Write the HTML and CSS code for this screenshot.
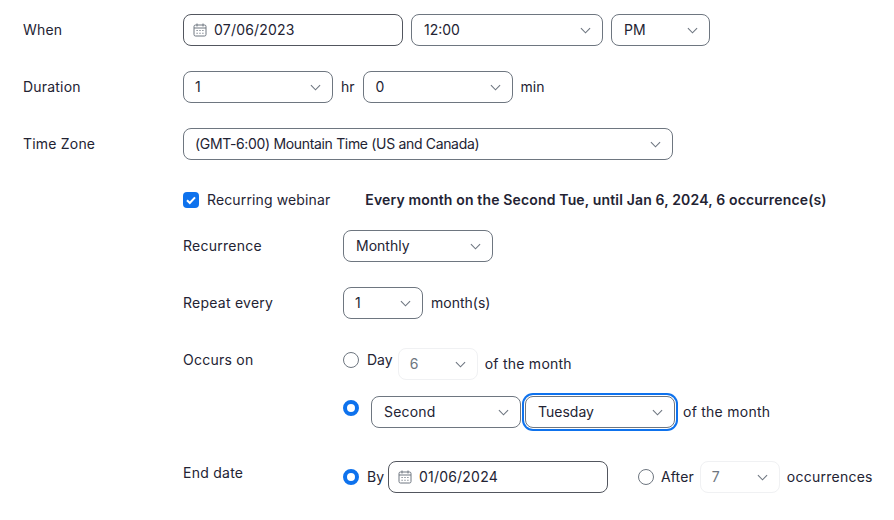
FILE: index.html
```html
<!DOCTYPE html>
<html lang="en">
<head>
<meta charset="utf-8">
<title>Webinar schedule</title>
<link rel="stylesheet" href="styles.css">
</head>
<body>
<svg class="defs" width="0" height="0" aria-hidden="true">
  <symbol id="chev" viewBox="0 0 12 12"><path d="M1 3.500 6 8.500 11 3.500" fill="none" stroke="currentColor" stroke-width="1.200"/></symbol>
  <symbol id="cal" viewBox="0 0 14 14"><path d="M2.500 2h9A1.500 1.500 0 0 1 13 3.500v8a1.500 1.500 0 0 1-1.500 1.500h-9A1.500 1.500 0 0 1 1 11.500v-8A1.500 1.500 0 0 1 2.500 2ZM1 5h12M4 .5v3M10 .5v3" fill="none" stroke="#6e7680" stroke-width="1"/><path d="M3.500 7h1.200v1.100H3.500ZM6.400 7h1.200v1.100H6.400ZM9.300 7h1.200v1.100H9.300ZM3.500 9.700h1.200v1.100H3.500ZM6.400 9.700h1.200v1.100H6.400ZM9.300 9.700h1.200v1.100H9.300Z" fill="#6e7680"/></symbol>
</svg>
<main class="form">
  <div class="row r-when">
    <div class="label">When</div>
    <div class="field w220 dark"><svg class="cal"><use href="#cal"/></svg><span class="date">07/06/2023</span></div>
    <div class="field select w192"><span>12:00</span><svg class="chev"><use href="#chev"/></svg></div>
    <div class="field select w99"><span>PM</span><svg class="chev"><use href="#chev"/></svg></div>
  </div>
  <div class="row r-duration">
    <div class="label">Duration</div>
    <div class="field select w150"><span class="nudge">1</span><svg class="chev"><use href="#chev"/></svg></div>
    <span class="unit hr">hr</span>
    <div class="field select w150"><span>0</span><svg class="chev"><use href="#chev"/></svg></div>
    <span class="unit">min</span>
  </div>
  <div class="row r-zone">
    <div class="label">Time Zone</div>
    <div class="field select w490"><span class="tight">(GMT-6:00) Mountain Time (US and Canada)</span><svg class="chev"><use href="#chev"/></svg></div>
  </div>
  <div class="sub">
    <div class="recurring">
      <span class="check"><svg viewBox="0 0 16 16" width="16" height="16"><path d="M4 8.300 6.800 11 12 5.400" fill="none" stroke="#fff" stroke-width="2"/></svg></span>
      <span class="check-label">Recurring webinar</span>
      <strong class="summary">Every month on the Second Tue, until Jan 6, 2024, 6 occurrence(s)</strong>
    </div>
    <div class="row r-recur">
      <div class="sublabel">Recurrence</div>
      <div class="field select w150"><span>Monthly</span><svg class="chev"><use href="#chev"/></svg></div>
    </div>
    <div class="row r-repeat">
      <div class="sublabel">Repeat every</div>
      <div class="field select w80"><span class="nudge">1</span><svg class="chev"><use href="#chev"/></svg></div>
      <span class="unit">month(s)</span>
    </div>
    <div class="occurs">
      <div class="sublabel">Occurs on</div>
      <div class="occurs-options">
        <div class="opt-day">
          <span class="radio"></span>
          <span class="opt-text">Day</span>
          <div class="field select w80 muted"><span class="nudge">6</span><svg class="chev"><use href="#chev"/></svg></div>
          <span class="unit wide">of the month</span>
        </div>
        <div class="opt-week">
          <span class="radio on"></span>
          <div class="field select w150"><span class="date">Second</span><svg class="chev"><use href="#chev"/></svg></div>
          <div class="field select w150 focus"><span>Tuesday</span><svg class="chev"><use href="#chev"/></svg></div>
          <span class="unit wide">of the month</span>
        </div>
      </div>
    </div>
    <div class="row r-end">
      <div class="sublabel end-label">End date</div>
      <span class="radio on"></span>
      <span class="by">By</span>
      <div class="field w220 dark"><svg class="cal"><use href="#cal"/></svg><span class="date">01/06/2024</span></div>
      <span class="radio after"></span>
      <span class="after-text">After</span>
      <div class="field select w80 muted"><span class="nudge">7</span><svg class="chev"><use href="#chev"/></svg></div>
      <span class="unit wide last">occurrences</span>
    </div>
  </div>
</main>
</body>
</html>
```
FILE: styles.css
```css
* { box-sizing: border-box; }
html, body { margin: 0; padding: 0; background: #fff; }
body {
  width: 894px;
  height: 520px;
  overflow: hidden;
  font-family: Inter, "Liberation Sans", sans-serif;
  font-size: 14px;
  color: #232333;
}
.defs { display: block; height: 0; }
.form { padding: 14px 0 0 23px; }
.row { display: flex; align-items: center; height: 32px; }
.label { width: 160px; flex: none; letter-spacing: .2px; padding-bottom: 2px; }
.sublabel { width: 160px; flex: none; letter-spacing: .25px; padding-bottom: 2px; }
.r-when .field + .field { margin-left: 8px; }
.r-duration, .r-zone { margin-top: 25px; }
.sub { padding-left: 160px; }
.recurring { display: flex; align-items: center; height: 16px; margin-top: 32px; }
.check { width: 16px; height: 16px; border-radius: 4px; background: #0e72ed; flex: none; display: block; }
.check svg { display: block; }
.check-label { margin: 0 0 2px 8px; letter-spacing: .13px; }
.summary { margin: 0 0 2px 35px; font-weight: 600; letter-spacing: .155px; }
.r-recur { margin-top: 22px; }
.r-repeat { margin-top: 25px; }
.field {
  display: flex;
  align-items: center;
  height: 32px;
  flex: none;
  border: 1px solid #6e7680;
  border-radius: 8px;
  padding: 0 11px 0 12px;
  background: #fff;
}
.field.select { justify-content: space-between; }
.field > span { white-space: nowrap; margin-bottom: 2px; }
.date { letter-spacing: .2px; }
.tight { letter-spacing: -.33px; margin-left: -1px; }
.nudge { margin-left: -1px; }
.dark { border-color: #52565e; }
.w80 { width: 80px; }
.w99 { width: 99px; }
.w150 { width: 150px; }
.w192 { width: 192px; }
.w220 { width: 220px; padding-left: 9px; }
.w490 { width: 490px; }
.chev { width: 11px; height: 11px; flex: none; color: #6e7680; }
.cal { width: 14px; height: 14px; margin-right: 7px; flex: none; }
.unit { margin: 0 0 2px 8px; white-space: nowrap; }
.unit.hr { margin-right: 8px; }
.unit.wide { letter-spacing: .25px; }
.unit.last { margin-left: 7px; }
.muted { border-color: #f0f1f3; color: #6e7680; }
.focus { box-shadow: 0 0 0 1px #fff, 0 0 0 3px #0e72ed; border-color: #6e7680; }
.occurs { display: flex; margin-top: 29px; }
.occurs .sublabel { line-height: 17px; margin-top: 3px; }
.radio {
  width: 16px;
  height: 16px;
  flex: none;
  border-radius: 50%;
  border: 1px solid #6e7680;
  background: #fff;
  display: block;
}
.radio.on { border: 4px solid #0e72ed; }
.opt-day { display: flex; align-items: center; height: 32px; }
.opt-day .radio { margin-top: -8px; }
.opt-text { margin: -10px 5px 0 8px; }
.opt-day .unit { margin-left: 7px; }
.opt-week { display: flex; align-items: center; height: 32px; margin-top: 16px; }
.opt-week .radio { margin-top: -8px; margin-right: 12px; }
.opt-week .field + .field { margin-left: 4px; }
.r-end { margin-top: 33px; }
.end-label { padding-bottom: 10px; }
.by { margin: 0 4px 2px 8px; }
.radio.after { margin-left: 30px; }
.after-text { margin: 0 6px 2px 7px; letter-spacing: .1px; }
```
